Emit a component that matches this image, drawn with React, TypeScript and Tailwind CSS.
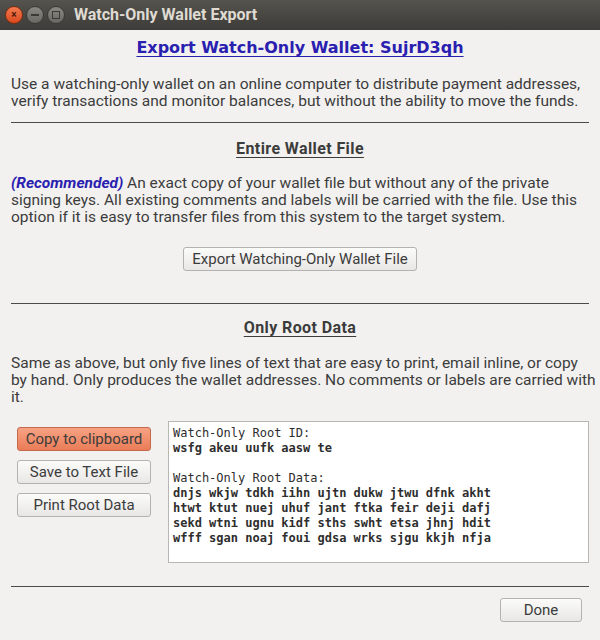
import React from "react";

const ui = { fontFamily: 'Roboto, "Open Sans", sans-serif' };
const mono = { fontFamily: '"DejaVu Sans Mono", "Liberation Mono", monospace' };

function TitleBar() {
  return (
    <div className="h-[30px] flex items-center bg-gradient-to-b from-[#55534e] to-[#3d3c38] px-[5px]">
      <div className="flex items-center gap-[3px]">
        <span className="w-[18px] h-[18px] rounded-full bg-gradient-to-b from-[#f47a4e] to-[#d9481c] border border-[#7a2c10] flex items-center justify-center text-[#4a1a08] text-[10px] font-bold leading-none">
          ×
        </span>
        <span className="w-[18px] h-[18px] rounded-full bg-gradient-to-b from-[#8a8883] to-[#6a6863] border border-[#3a3936] flex items-center justify-center">
          <span className="w-[8px] h-[2px] bg-[#3a3936]" />
        </span>
        <span className="w-[18px] h-[18px] rounded-full bg-gradient-to-b from-[#8a8883] to-[#6a6863] border border-[#3a3936] flex items-center justify-center">
          <span className="w-[8px] h-[8px] border-[1.5px] border-[#3a3936]" />
        </span>
      </div>
      <span className="ml-[9px] text-[16px] font-bold text-[#dfdbd2]" style={ui}>
        Watch-Only Wallet Export
      </span>
    </div>
  );
}

function Btn({ children, primary, className = "" }: { children: React.ReactNode; primary?: boolean; className?: string }) {
  return (
    <button
      className={
        "h-[24px] rounded-[3px] border text-[15px] leading-none text-[#3c3c3c] " +
        (primary
          ? "bg-gradient-to-b from-[#f6a283] to-[#ea7c57] border-[#c46a4b] "
          : "bg-gradient-to-b from-[#fbfbfa] to-[#e8e7e5] border-[#b4b2ae] ") +
        className
      }
      style={ui}
    >
      {children}
    </button>
  );
}

function Rule() {
  return <div className="h-px bg-[#4b4b4b] mx-[11px]" />;
}

function Heading({ children }: { children: React.ReactNode }) {
  return (
    <div className="text-center">
      <span className="text-[16px] font-bold tracking-[0.4px] underline underline-offset-[3px] text-[#3c3c3c]">
        {children}
      </span>
    </div>
  );
}

export default function App() {
  return (
    <div className="w-[600px] h-[640px] bg-[#f2f1f0] flex flex-col overflow-hidden" style={ui}>
      <TitleBar />
      <div className="flex flex-col text-[#3c3c3c] text-[15.5px] leading-[17px]">
        <div className="pt-[9px] text-center">
          <span
            className="text-[16px] font-bold underline text-[#2a20b0] underline-offset-[3px]"
            style={{ fontFamily: '"DejaVu Sans", sans-serif' }}
          >
            Export Watch-Only Wallet: SujrD3qh
          </span>
        </div>
        <div className="px-[11px] pt-[19px] pb-[12px]">
          <div className="whitespace-nowrap">Use a watching-only wallet on an online computer to distribute payment addresses,</div>
          <div className="whitespace-nowrap">verify transactions and monitor balances, but without the ability to move the funds.</div>
        </div>
        <Rule />
        <div className="pt-[17px]">
          <Heading>Entire Wallet File</Heading>
        </div>
        <div className="px-[11px] pt-[17px]">
          <div className="whitespace-nowrap">
            <span className="font-bold italic text-[#2a20b0]">(Recommended)</span> An exact copy of your wallet file but without any of the private
          </div>
          <div className="whitespace-nowrap">signing keys. All existing comments and labels will be carried with the file. Use this</div>
          <div className="whitespace-nowrap">option if it is easy to transfer files from this system to the target system.</div>
        </div>
        <div className="flex justify-center pt-[21px] pb-[32px]">
          <Btn className="w-[234px]">Export Watching-Only Wallet File</Btn>
        </div>
        <Rule />
        <div className="pt-[15px]">
          <Heading>Only Root Data</Heading>
        </div>
        <div className="px-[11px] pt-[18px]">
          <div className="whitespace-nowrap">Same as above, but only five lines of text that are easy to print, email inline, or copy</div>
          <div className="whitespace-nowrap">by hand. Only produces the wallet addresses. No comments or labels are carried with</div>
          <div className="whitespace-nowrap">it.</div>
        </div>
        <div className="flex px-[11px] pt-[15px] gap-[11px]">
          <div className="flex flex-col gap-[9px] pt-[6px] px-[6px]">
            <Btn primary className="w-[134px]">Copy to clipboard</Btn>
            <Btn className="w-[134px]">Save to Text File</Btn>
            <Btn className="w-[134px]">Print Root Data</Btn>
          </div>
          <div
            className="w-[421px] h-[142px] bg-white border border-[#b8b6b2] px-[4px] pt-[4px] text-[12px] leading-[15px] text-[#2e2e2e]"
            style={mono}
          >
            <div>Watch-Only Root ID:</div>
            <div className="font-bold">wsfg akeu uufk aasw te</div>
            <div>&nbsp;</div>
            <div>Watch-Only Root Data:</div>
            <div className="font-bold">dnjs wkjw tdkh iihn ujtn dukw jtwu dfnk akht</div>
            <div className="font-bold">htwt ktut nuej uhuf jant ftka feir deji dafj</div>
            <div className="font-bold">sekd wtni ugnu kidf sths swht etsa jhnj hdit</div>
            <div className="font-bold">wfff sgan noaj foui gdsa wrks sjgu kkjh nfja</div>
          </div>
        </div>
        <div className="pt-[23px]">
          <Rule />
        </div>
        <div className="flex justify-end px-[18px] pt-[11px]">
          <Btn className="w-[82px]">Done</Btn>
        </div>
      </div>
    </div>
  );
}
